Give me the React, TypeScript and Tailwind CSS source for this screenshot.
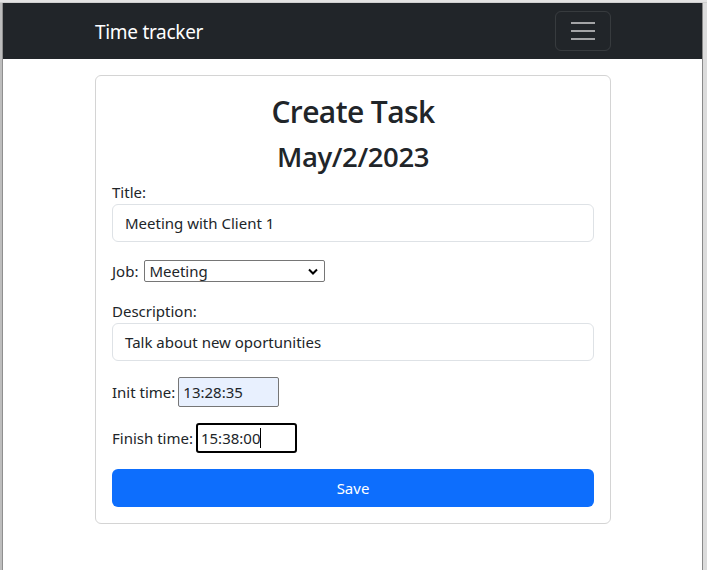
export default function App() {
  const font = { fontFamily: '"Noto Sans", "Open Sans", sans-serif' };
  const head = { fontFamily: '"Open Sans", "Noto Sans", sans-serif' };
  return (
    <div className="w-[707px] h-[570px] overflow-hidden bg-white flex flex-col text-[#212529]" style={font}>
      <div className="h-[3px] bg-[#e3e3e3] flex-none border-b border-[#cfcfcf]" />
      <div className="flex flex-1 min-h-0">
        <div className="w-[3px] bg-[#bdbdbd] border-r border-[#8f8f8f] flex-none" />
        <div className="flex-1 flex flex-col min-w-0">
          <nav className="h-[56px] bg-[#212529] flex items-center justify-between pl-[92px] pr-[91px] flex-none">
            <span className="text-white text-[19px] leading-none tracking-[-0.3px] mt-[2px]">Time tracker</span>
            <button className="w-[56px] h-[40px] rounded-[6px] border border-white/10 flex flex-col items-center justify-center gap-[6px]">
              <span className="block w-[24px] h-[2px] bg-[#a3a4a6]" />
              <span className="block w-[24px] h-[2px] bg-[#a3a4a6]" />
              <span className="block w-[24px] h-[2px] bg-[#a3a4a6]" />
            </button>
          </nav>
          <div className="pl-[92px] pr-[91px] pt-[16px]">
            <div className="border border-[#d4d4d4] rounded-[6px] px-[16px] pt-[17px] pb-[16px]">
              <h2 className="text-center text-[30px] font-semibold leading-[1.24] tracking-[-0.6px]" style={head}>Create Task</h2>
              <h3 className="text-center text-[27.5px] font-semibold leading-[1.24] mt-[10px] tracking-[-0.4px]" style={head}>May/2/2023</h3>
              <div className="mt-[6px] text-[15px] leading-[24px]">Title:</div>
              <div className="h-[38px] border border-[#dee2e6] rounded-[6px] px-[12px] flex items-center text-[15px]">Meeting with Client 1</div>
              <div className="mt-[18px] flex items-center text-[15px] h-[22px]">
                <span>Job:</span>
                <div className="ml-[6px] w-[181px] h-[22px] border border-[#767676] rounded-[2px] flex items-center justify-between pl-[4px] pr-[6px]">
                  <span className="text-[15px] leading-none">Meeting</span>
                  <svg width="10" height="7" viewBox="0 0 10 7"><path d="M1 1.5 L5 5.5 L9 1.5" stroke="#000" strokeWidth="2" fill="none" /></svg>
                </div>
              </div>
              <div className="mt-[17px] text-[15px] leading-[24px]">Description:</div>
              <div className="h-[38px] border border-[#dee2e6] rounded-[6px] px-[12px] flex items-center text-[15px]">Talk about new oportunities</div>
              <div className="mt-[16px] flex items-center text-[15px] h-[30px]">
                <span>Init time:</span>
                <div className="ml-[3px] w-[101px] h-[30px] border border-[#767676] rounded-[2px] bg-[#e8f0fe] flex items-center pl-[4px] text-[15px]">13:28:35</div>
              </div>
              <div className="mt-[16px] flex items-center text-[15px] h-[30px]">
                <span>Finish time:</span>
                <div className="ml-[3px] w-[101px] h-[30px] border-2 border-black rounded-[3px] flex items-center pl-[3px] text-[15px]">
                  <span>15:38:00</span>
                  <span className="w-px h-[20px] bg-black" />
                </div>
              </div>
              <button className="mt-[16px] w-full h-[38px] bg-[#0d6efd] text-white rounded-[6px] text-[15px]">Save</button>
            </div>
          </div>
        </div>
        <div className="w-[5px] bg-[#dcdcdc] border-l border-[#8a8a8a] flex-none" />
      </div>
    </div>
  );
}
